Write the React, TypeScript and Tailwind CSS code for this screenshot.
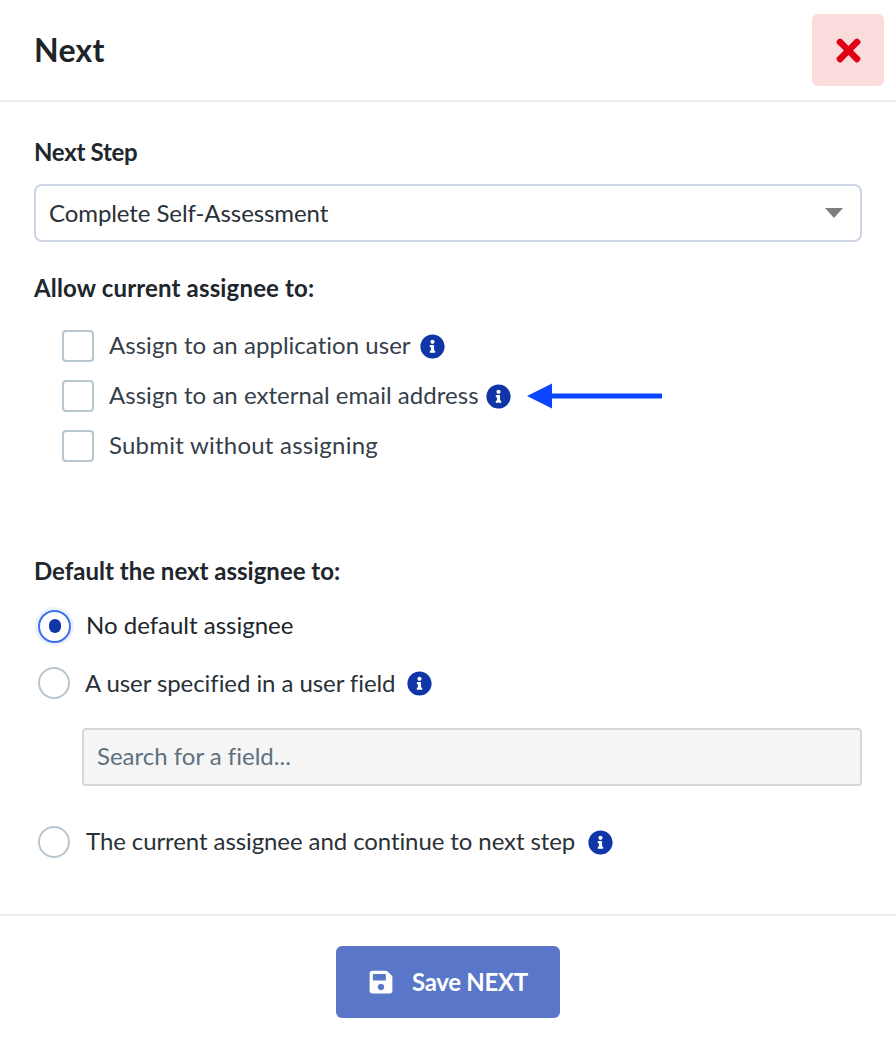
import React from "react";
import { FaSave, FaTimes, FaInfoCircle } from "react-icons/fa";

function Info({ cls }: { cls: string }) {
  return <FaInfoCircle className={`text-[#1035a8] shrink-0 ${cls}`} size={25} />;
}

function Check({ label, info, cls = "" }: { label: string; info?: string; cls?: string }) {
  return (
    <div className="flex items-center h-[50px]">
      <span className="w-8 h-8 rounded-[4px] border-2 border-[#b8c6cf] bg-white shrink-0" />
      <span className={`ml-[15px] -mt-[2px] text-[#36404a] ${cls}`}>{label}</span>
      {info && <Info cls={info} />}
    </div>
  );
}

export default function App() {
  return (
    <div className="relative w-[896px] h-[1046px] bg-white flex flex-col font-['Lato',sans-serif] [font-variant-ligatures:none] text-[24px] leading-[32px] text-[#20262c] overflow-hidden">
      <header className="h-[102px] shrink-0 border-b-2 border-[#e8ecf3] flex items-start justify-between pl-[34px] pr-[12px] pt-[14px]">
        <h1 className="text-[32px] leading-[72px] font-bold text-[#1f2429] tracking-[0.3px]">Next</h1>
        <button className="w-[72px] h-[72px] rounded-[6px] bg-[#fbdcdd] flex items-center justify-center">
          <FaTimes className="text-[#e00016]" size={35} />
        </button>
      </header>

      <main className="flex-1 pl-[34px] pr-[34px] pt-[34px]">
        <div className="font-bold tracking-[-0.3px]">Next Step</div>
        <div className="mt-[16px] h-[58px] rounded-[8px] border-2 border-[#cdd4e2] flex items-center justify-between pl-[13px] pr-[17px] text-[#2a3138]">
          <span className="tracking-[-0.08px]">Complete Self-Assessment</span>
          <span className="w-0 h-0 border-l-[9px] border-r-[9px] border-t-[10px] border-l-transparent border-r-transparent border-t-[#7d7d7d]" />
        </div>

        <div className="font-bold mt-[30px] tracking-[0.16px]">Allow current assignee to:</div>
        <div className="mt-[17px] pl-[28px]">
          <Check label="Assign to an application user" cls="tracking-[0.03px]" info="ml-[9px]" />
          <Check label="Assign to an external email address" cls="tracking-[0.03px]" info="ml-[7px]" />
          <Check label="Submit without assigning" cls="tracking-[0.22px]" />
        </div>

        <div className="font-bold mt-[84px]">Default the next assignee to:</div>

        <div className="mt-[23px] flex items-center h-[32px] pl-[4px]">
          <span className="w-[33px] h-[33px] rounded-full border-2 border-[#3d6ff0] shadow-[0_0_0_3px_#eef2fd] flex items-center justify-center shrink-0">
            <span className="w-[12px] h-[14px] rounded-full bg-[#1035a8]" />
          </span>
          <span className="ml-[15px] -mt-[2px]">No default assignee</span>
        </div>

        <div className="mt-[25px] flex items-center h-[32px] pl-[4px]">
          <span className="w-[32px] h-[32px] rounded-full border-2 border-[#b8c6cf] shrink-0" />
          <span className="ml-[15px] text-[#2a3138] tracking-[-0.07px]">A user specified in a user field</span>
          <Info cls="ml-[12px]" />
        </div>

        <div className="mt-[29px] ml-[48px] h-[58px] rounded-[4px] border-2 border-[#d3d8dc] bg-[#f5f5f5] flex items-center pl-[13px] text-[#5e717d]">
          <span className="-mt-[3px]">Search for a field...</span>
        </div>

        <div className="mt-[40px] flex items-center h-[32px] pl-[4px]">
          <span className="w-[32px] h-[32px] rounded-full border-2 border-[#b8c6cf] shrink-0" />
          <span className="ml-[16px] -mt-[2px] text-[#2a3138] tracking-[-0.09px]">The current assignee and continue to next step</span>
          <Info cls="ml-[13px]" />
        </div>
      </main>

      <footer className="h-[132px] shrink-0 border-t-2 border-[#e8ecf3] flex justify-center pt-[30px]">
        <button className="w-[224px] h-[72px] rounded-[6px] bg-[#5a76c9] text-white font-bold flex items-center justify-center gap-[18px]">
          <FaSave size={26} />
          <span className="tracking-[-0.3px]">Save NEXT</span>
        </button>
      </footer>

      <svg className="absolute left-[525px] top-[383px]" width="138" height="26" viewBox="0 0 138 26">
        <path d="M2 13 L27 0.5 L27 10.5 L137 10.5 L137 15.5 L27 15.5 L27 25.5 Z" fill="#0a46ff" />
      </svg>
    </div>
  );
}
